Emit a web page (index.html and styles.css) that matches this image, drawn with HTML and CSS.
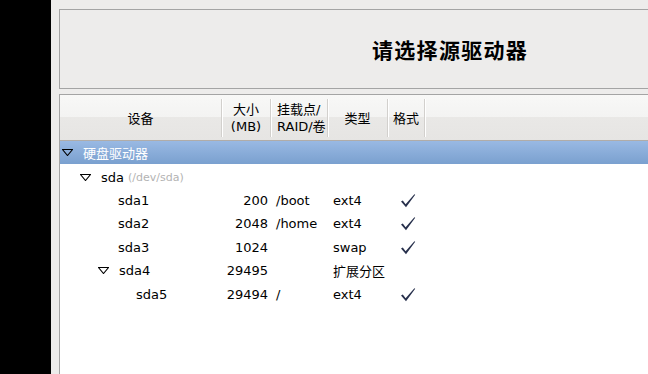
FILE: index.html
```html
<!DOCTYPE html>
<html>
  <head>
    <title>请选择源驱动器</title>
    <link rel="stylesheet" href="styles.css">
  </head>
  <body>
    <div class="sidebar"></div>
    <div class="main">
      <div class="title-box">
        <h1>请选择源驱动器</h1>
      </div>
      <div class="table">
        <div class="head">
          <div class="hcell center">设备</div>
          <div class="hcell center">大小<br>(MB)</div>
          <div class="hcell left">挂载点/<br>RAID/卷</div>
          <div class="hcell center">类型</div>
          <div class="hcell center">格式</div>
          <div class="hcell last"></div>
        </div>

        <div class="row selected">
          <div class="name indent0">
            <svg class="arrow" width="11" height="7" viewBox="0 0 11 7"><polygon points="0.5,0.5 10.5,0.5 5.5,6.5" /></svg>
            <span>硬盘驱动器</span>
          </div>
        </div>

        <div class="row">
          <div class="name indent1">
            <svg class="arrow" width="11" height="7" viewBox="0 0 11 7"><polygon points="0.5,0.5 10.5,0.5 5.5,6.5" /></svg>
            <span>sda</span> <span class="dev">(/dev/sda)</span>
          </div>
        </div>

        <div class="row">
          <div class="name indent2">sda1</div>
          <div class="size">200</div>
          <div class="mount">/boot</div>
          <div class="type">ext4</div>
          <div class="fmt"><svg class="check" width="16" height="15" viewBox="0 0 16 15"><path d="M1 8.6 L2.8 7.6 L5.6 11.2 L14.4 1.2 L15.2 1.8 L6 14.2 Z" /></svg></div>
        </div>

        <div class="row">
          <div class="name indent2">sda2</div>
          <div class="size">2048</div>
          <div class="mount">/home</div>
          <div class="type">ext4</div>
          <div class="fmt"><svg class="check" width="16" height="15" viewBox="0 0 16 15"><path d="M1 8.6 L2.8 7.6 L5.6 11.2 L14.4 1.2 L15.2 1.8 L6 14.2 Z" /></svg></div>
        </div>

        <div class="row">
          <div class="name indent2">sda3</div>
          <div class="size">1024</div>
          <div class="mount"></div>
          <div class="type">swap</div>
          <div class="fmt"><svg class="check" width="16" height="15" viewBox="0 0 16 15"><path d="M1 8.6 L2.8 7.6 L5.6 11.2 L14.4 1.2 L15.2 1.8 L6 14.2 Z" /></svg></div>
        </div>

        <div class="row">
          <div class="name indent1b">
            <svg class="arrow" width="11" height="7" viewBox="0 0 11 7"><polygon points="0.5,0.5 10.5,0.5 5.5,6.5" /></svg>
            <span>sda4</span>
          </div>
          <div class="size">29495</div>
          <div class="mount"></div>
          <div class="type">扩展分区</div>
          <div class="fmt"></div>
        </div>

        <div class="row">
          <div class="name indent3">sda5</div>
          <div class="size">29494</div>
          <div class="mount">/</div>
          <div class="type">ext4</div>
          <div class="fmt"><svg class="check" width="16" height="15" viewBox="0 0 16 15"><path d="M1 8.6 L2.8 7.6 L5.6 11.2 L14.4 1.2 L15.2 1.8 L6 14.2 Z" /></svg></div>
        </div>
      </div>
    </div>
  </body>
</html>
```

FILE: styles.css
```css
body {
  margin: 0;
  padding: 0;
  display: flex;
  height: 374px;
  overflow: hidden;
  background-color: #edeceb;
  font-family: "DejaVu Sans", "Noto Sans CJK SC", sans-serif;
  font-size: 13px;
  color: #000;
}

.sidebar {
  width: 51px;
  flex-shrink: 0;
  background-color: #000;
}

.main {
  flex: 1;
  min-width: 0;
  padding: 9px 0 0 8px;
  display: flex;
  flex-direction: column;
}

.title-box {
  height: 78px;
  border: 1px solid #a4a4a4;
  border-right: none;
  display: flex;
  align-items: center;
  padding-left: 312px;
}

h1 {
  margin: 0;
  font-size: 21px;
  font-weight: bold;
  font-family: "Noto Sans CJK SC", sans-serif;
  letter-spacing: 1.3px;
}

.table {
  margin-top: 5px;
  flex: 1;
  background-color: #fff;
  border-top: 1px solid #a4a4a4;
  border-left: 1px solid #a4a4a4;
}

.head,
.row {
  display: grid;
  grid-template-columns: 162px 49px 57px 60px 37px 1fr;
}

.head {
  height: 45px;
  border-bottom: 1px solid #b0aca8;
  background: linear-gradient(#f8f8f7, #f3f3f2 50%, #e9e8e6 50%, #e6e5e3);
}

.hcell {
  margin: 4px 0 3px;
  border-right: 1px solid #d2d0cd;
  box-shadow: 1px 0 0 #fff;
  display: flex;
  align-items: center;
  line-height: 17px;
}

.hcell.center {
  justify-content: center;
  text-align: center;
}

.hcell.left {
  padding-left: 6px;
}

.hcell.last {
  border-right: none;
  box-shadow: none;
}

.row {
  height: 23.4px;
  box-sizing: border-box;
  padding-top: 3px;
  align-items: center;
}

.row.selected {
  background: linear-gradient(#99b9e3, #7aa0cf);
  color: #fff;
  height: 23px;
  padding-top: 0;
}

.name {
  display: flex;
  align-items: center;
  white-space: nowrap;
}

.indent0 {
  padding-left: 2px;
}

.indent1 {
  padding-left: 20px;
}

.indent1b {
  padding-left: 38px;
}

.indent2 {
  padding-left: 58px;
}

.indent3 {
  padding-left: 76px;
}

.arrow {
  margin-right: 10px;
}

.arrow polygon {
  fill: none;
  stroke: #000;
  stroke-width: 1.1;
}

.dev {
  margin-left: 4px;
  color: #b3b3b3;
  font-size: 11px;
}

.size {
  text-align: right;
  padding-right: 3px;
}

.mount {
  padding-left: 5px;
}

.type {
  padding-left: 5px;
}

.fmt {
  display: flex;
  justify-content: center;
  padding-left: 2px;
}

.check path {
  fill: #27304c;
}
```
